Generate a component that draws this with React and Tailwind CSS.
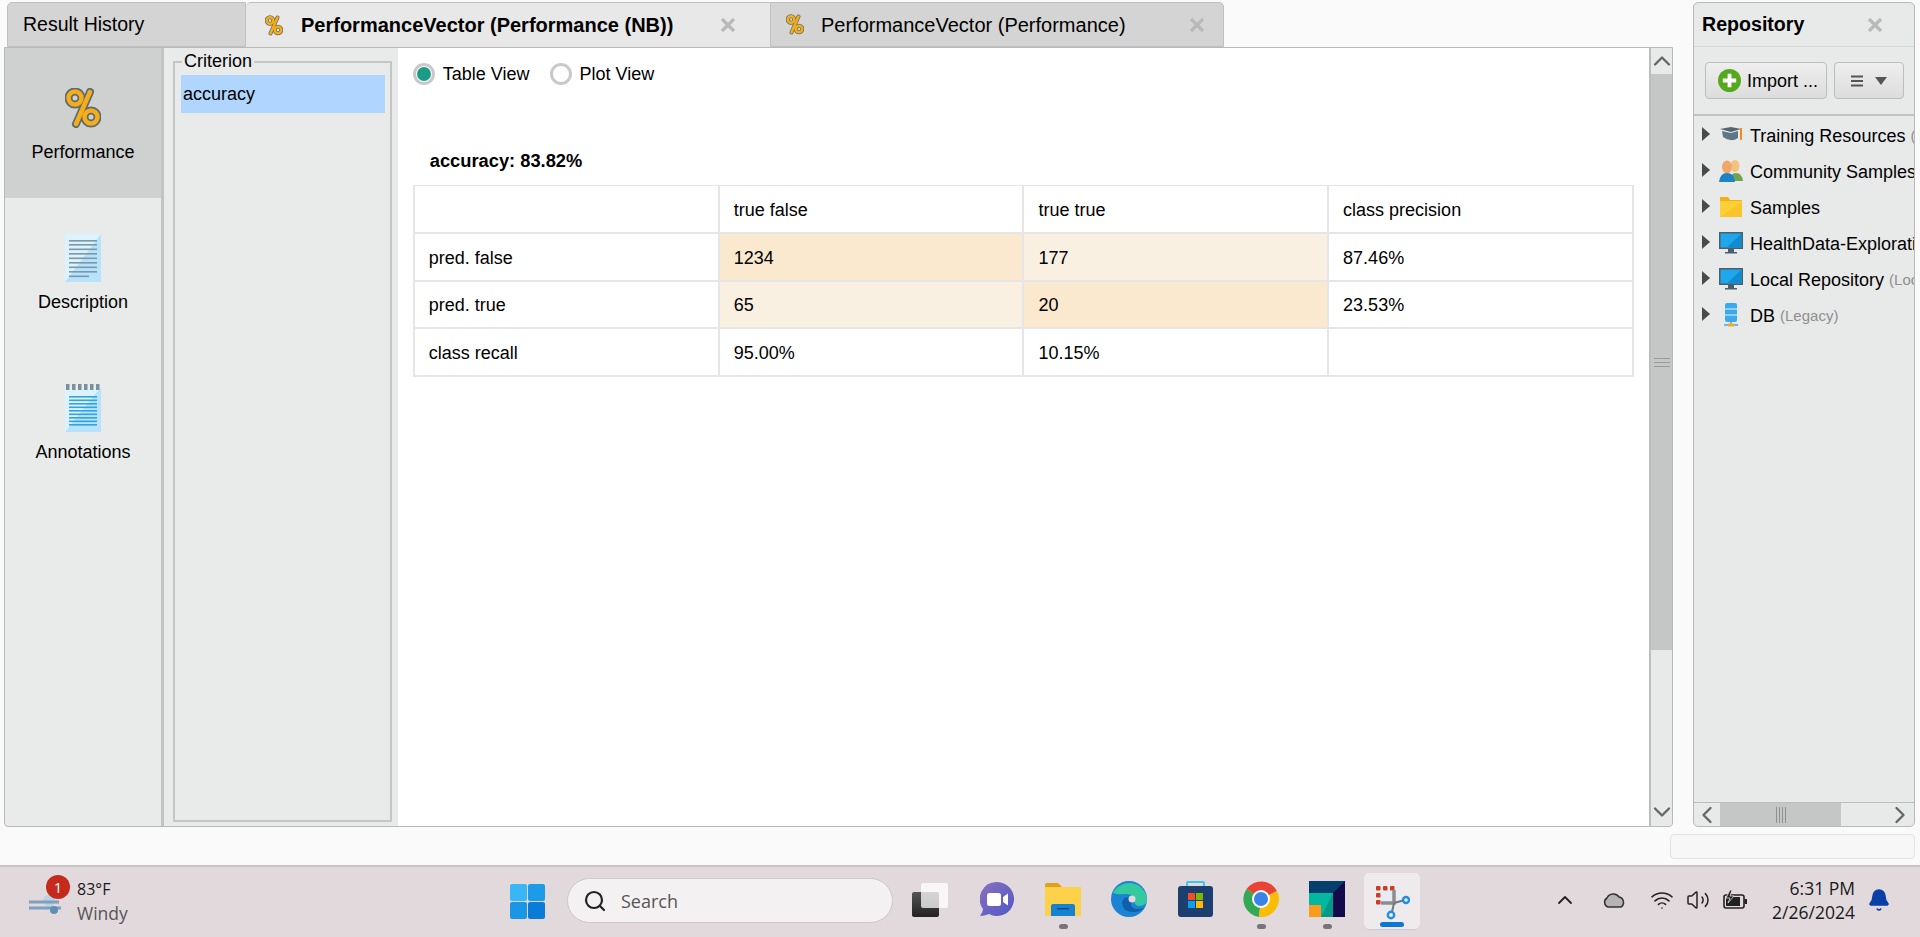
import { Wifi, Volume2, Search, ChevronUp, ChevronDown, ChevronLeft, ChevronRight, Bell } from 'lucide-react';

const rows = [
  { label: '', cells: ['true false', 'true true', 'class precision'], tint: ['', '', ''] },
  { label: 'pred. false', cells: ['1234', '177', '87.46%'], tint: ['bg-[#fae8cf]', 'bg-[#f9f0e2]', ''] },
  { label: 'pred. true', cells: ['65', '20', '23.53%'], tint: ['bg-[#f9f0e2]', 'bg-[#fae8cf]', ''] },
  { label: 'class recall', cells: ['95.00%', '10.15%', ''], tint: ['', '', ''] },
];

function PercentIcon({ small }) {
  return (
    <svg viewBox="0 0 36 40" className={small ? 'w-[18px] h-[21px]' : 'w-[36px] h-[40px]'}>
      <g fill="none" stroke="#5f6b70" strokeWidth="8">
        <circle cx="10" cy="10" r="6.5" />
        <circle cx="26" cy="29" r="6.5" />
        <path d="M25 4 L11 36" strokeLinecap="round" />
      </g>
      <g fill="none" stroke="#f5ae17" strokeWidth={small ? 5 : 4.5}>
        <circle cx="10" cy="10" r="6.5" />
        <circle cx="26" cy="29" r="6.5" />
        <path d="M25 4 L11 36" strokeLinecap="round" />
      </g>
    </svg>
  );
}

function DocIcon({ notes }) {
  const lines = notes ? [11, 14.5, 18, 21.5, 25, 28.5, 32, 35.5, 39] : [5, 9, 13.5, 18, 22.5, 27, 31.5, 36, 40.5];
  const color = notes ? '#2fa4e0' : '#7c97a8';
  return (
    <svg viewBox="0 0 36 48" className="w-[36px] h-[48px]">
      <rect x="0" y={notes ? 3 : 0} width="36" height={notes ? 45 : 48} fill="#b6e3fb" />
      <path d={notes ? 'M0 3 H36 L0 48 Z' : 'M0 0 H36 L0 48 Z'} fill="#dcf2fd" />
      {lines.map((y, i) => (
        <rect key={y} x="4" y={y + 1} width={i === lines.length - 1 && !notes ? 20 : 28} height="1.6" fill={color} />
      ))}
      {notes && [1, 7, 13, 19, 25, 31].map(x => <rect key={x} x={x} y="0" width="3.5" height="6" fill="#7d8f9a" />)}
    </svg>
  );
}

function CloseX() {
  return (
    <svg viewBox="0 0 16 16" className="w-[16px] h-[16px]">
      <path d="M2 2 L14 14 M14 2 L2 14" stroke="#b9b9b9" strokeWidth="3.2" />
    </svg>
  );
}

function TreeIcon({ kind }) {
  if (kind === 'cap') return (
    <svg viewBox="0 0 24 24" className="w-[24px] h-[24px]">
      <path d="M1 6 L12 4 L22 6 L12 9 Z" fill="#52646f" />
      <path d="M3 8 L12 10 L19 8 V15 Q12 20 4 14 Z" fill="#5f7785" />
      <path d="M22 5 V17" stroke="#f28a22" strokeWidth="2" />
    </svg>
  );
  if (kind === 'users') return (
    <svg viewBox="0 0 24 24" className="w-[24px] h-[24px]">
      <ellipse cx="16" cy="7" rx="4.5" ry="6" fill="#f2c27e" />
      <path d="M10 22 Q11 14 17 14 Q23 14 24 22 Z" fill="#6fa34f" />
      <ellipse cx="8" cy="8" rx="5" ry="6.5" fill="#f0a868" />
      <path d="M0 23 Q1 14 8 14 Q15 14 16 23 Z" fill="#1d82c6" />
    </svg>
  );
  if (kind === 'folder') return (
    <svg viewBox="0 0 24 24" className="w-[24px] h-[24px]">
      <path d="M1 2 H9 L11 5 H23 V22 H1 Z" fill="#f5ae17" />
      <rect x="1" y="6" width="22" height="16" fill="#fdd037" />
      <path d="M1 22 L23 7 V22 Z" fill="#fcc42b" />
    </svg>
  );
  if (kind === 'db') return (
    <svg viewBox="0 0 24 24" className="w-[24px] h-[24px]">
      <rect x="6" y="0" width="12" height="19" rx="2" fill="#3ba9ec" />
      <path d="M6 6 H18 M6 12 H18" stroke="#a8dcf8" strokeWidth="1.4" />
      <path d="M12 19 V22 M5 22 H19" stroke="#3ba9ec" strokeWidth="1.5" />
      <rect x="9" y="20.5" width="6" height="3" fill="#f5ae17" />
    </svg>
  );
  return (
    <svg viewBox="0 0 24 24" className="w-[24px] h-[24px]">
      <rect x="0" y="1" width="24" height="17" fill="#4b5f6b" />
      <rect x="1.5" y="2.5" width="21" height="14" fill="#1ea7ea" />
      <path d="M22.5 2.5 V16.5 H8 Z" fill="#138bd0" />
      <rect x="9" y="18" width="6" height="3" fill="#4b5f6b" />
      <rect x="6" y="21" width="12" height="1.5" fill="#4b5f6b" />
    </svg>
  );
}

const tree = [
  { icon: 'cap', name: 'Training Resources', note: '(' },
  { icon: 'users', name: 'Community Samples', note: '' },
  { icon: 'folder', name: 'Samples', note: '' },
  { icon: 'monitor', name: 'HealthData-Exploration', note: '' },
  { icon: 'monitor', name: 'Local Repository', note: '(Local)' },
  { icon: 'db', name: 'DB', note: '(Legacy)' },
];

function TaskIcon({ children, dot }) {
  return (
    <div className="w-[66px] h-[57px] flex flex-col items-center">
      <div className="h-[48px] flex items-center">{children}</div>
      <div className={`mt-[1px] h-[5px] rounded-full ${dot ? 'w-[9px] bg-[#77757a]' : 'w-0'}`} />
    </div>
  );
}

export default function App() {
  return (
    <div className="w-[1920px] h-[937px] flex flex-col overflow-hidden bg-[#fafafa] text-black text-[18px] font-['Liberation_Sans',Arial,sans-serif]">
      <div className="h-[865px] pt-[2px]">
        <div className="flex h-[825px] pl-[4px] pr-[5px]">
          {/* results area */}
          <div className="w-[1669px] flex flex-col">
            <div className="flex h-[45px] pl-[3px] text-[19.5px]">
              <div className="w-[239px] flex items-center pl-[15px] bg-[#d4d4d4] border border-[#c0c0c0] rounded-tl-[5px]">Result History</div>
              <div className="w-[524px] flex items-center pl-[19px] bg-[#e8e8e8] border-t border-[#c0c0c0] rounded-tl-[5px]">
                <PercentIcon small />
                <span className="ml-[18px] font-bold text-[20px]">PerformanceVector (Performance (NB))</span>
                <span className="ml-auto mr-[34px]"><CloseX /></span>
              </div>
              <div className="w-[454px] flex items-center pl-[15px] bg-[#d4d4d4] border border-[#c0c0c0] rounded-tr-[5px]">
                <PercentIcon small />
                <span className="ml-[17px] text-[20px]">PerformanceVector (Performance)</span>
                <span className="ml-auto mr-[18px]"><CloseX /></span>
              </div>
            </div>

            <div className="h-[780px] flex border border-[#b9b9b9] rounded-b-[4px] overflow-hidden bg-[#e9ebea]">
              {/* side tabs */}
              <div className="w-[159px] border-r-[3px] border-[#c2c3c3] flex flex-col">
                <div className="h-[150px] bg-[#cfd0d0] pt-[40px] flex flex-col items-center">
                  <PercentIcon />
                  <span className="mt-[13px] leading-[22px]">Performance</span>
                </div>
                <div className="h-[150px] pt-[36px] flex flex-col items-center">
                  <DocIcon />
                  <span className="mt-[9px] leading-[22px]">Description</span>
                </div>
                <div className="h-[150px] pt-[36px] flex flex-col items-center">
                  <DocIcon notes />
                  <span className="mt-[9px] leading-[22px]">Annotations</span>
                </div>
              </div>

              {/* criterion list */}
              <div className="w-[234px] pl-[9px] pr-[6px] pt-[3px] pb-[4px]">
                <fieldset className="h-full border-2 border-[#c4c5c5]">
                  <legend className="ml-[7px] px-[2px] leading-[21px]">Criterion</legend>
                  <div className="mt-[3px] ml-[6px] mr-[5px] h-[38px] bg-[#b0d6ff] flex items-center pl-[2px] pt-[1px]">accuracy</div>
                </fieldset>
              </div>

              {/* table view */}
              <div className="w-[1252px] bg-white pl-[15px]">
                <div className="h-[52px] flex items-center">
                  <span className="w-[22px] h-[22px] rounded-full border-[3px] border-[#c9c9c9] flex items-center justify-center">
                    <span className="w-[14px] h-[14px] rounded-full bg-[#1c9c84]" />
                  </span>
                  <span className="ml-[8px]">Table View</span>
                  <span className="ml-[20px] w-[22px] h-[22px] rounded-full border-[3px] border-[#c9c9c9]" />
                  <span className="ml-[8px]">Plot View</span>
                </div>
                <div className="mt-[48px] ml-[17px] h-[37px] font-bold text-[18.3px] leading-[26px]">accuracy: 83.82%</div>
                <div className="w-[1221px] border-2 border-t border-b-0 border-[#e6e6e6]">
                  {rows.map(row => (
                    <div key={row.label} className="h-[47.75px] grid grid-cols-[303px_1fr_1fr_1fr] border-b-2 border-[#e6e6e6]">
                      <div className="flex items-center pl-[14px] pt-[3px]">{row.label}</div>
                      {row.cells.map((cell, i) => (
                        <div key={i} className={`flex items-center pl-[14px] pt-[3px] border-l-2 border-[#e6e6e6] ${row.tint[i]}`}>{cell}</div>
                      ))}
                    </div>
                  ))}
                </div>
              </div>

              {/* vertical scrollbar */}
              <div className="w-[23px] border-l-2 border-[#bdbdbd] flex flex-col bg-[#e8e9e9]">
                <div className="h-[26px] flex items-center justify-center"><ChevronUp className="w-[28px] h-[28px] shrink-0 text-[#666]" strokeWidth={2} /></div>
                <div className="h-[576px] bg-[#c5c7c6] flex flex-col items-center justify-center gap-[3px]">
                  <div className="w-[16px] h-px bg-[#9a9a9a]" />
                  <div className="w-[16px] h-px bg-[#9a9a9a]" />
                  <div className="w-[16px] h-px bg-[#9a9a9a]" />
                </div>
                <div className="mt-auto h-[28px] flex items-center justify-center"><ChevronDown className="w-[28px] h-[28px] shrink-0 text-[#666]" strokeWidth={2} /></div>
              </div>
            </div>
          </div>

          {/* repository */}
          <div className="ml-[20px] w-[222px] flex flex-col border border-[#b9b9b9] rounded-[5px] bg-[#e8e9e9] overflow-hidden">
            <div className="h-[44px] flex items-center pl-[8px] border-b border-[#d8d8d8]">
              <span className="font-bold text-[19.6px]">Repository</span>
              <span className="ml-[63px]"><CloseX /></span>
            </div>
            <div className="h-[69px] border-b-2 border-[#c2c3c3] flex items-start pt-[15px] pl-[11px] gap-[7px]">
              <div className="w-[122px] h-[37px] rounded-[4px] border border-[#bdbdbd] bg-gradient-to-b from-[#eeeeee] to-[#dddddd] flex items-center pl-[12px]">
                <svg viewBox="0 0 24 24" className="w-[23px] h-[23px]">
                  <circle cx="12" cy="12" r="12" fill="#55a91c" />
                  <path d="M12 5 V19 M5 12 H19" stroke="#fff" strokeWidth="4" />
                </svg>
                <span className="ml-[6px] pt-[2px] whitespace-nowrap">Import ...</span>
              </div>
              <div className="w-[70px] h-[37px] rounded-[4px] border border-[#bdbdbd] bg-gradient-to-b from-[#eeeeee] to-[#dddddd] flex items-center justify-center gap-[12px]">
                <svg viewBox="0 0 12 12" className="w-[12px] h-[12px]"><path d="M0 1.5 H12 M0 6 H12 M0 10.5 H12" stroke="#555" strokeWidth="2" /></svg>
                <svg viewBox="0 0 12 8" className="w-[12px] h-[8px]"><path d="M0 0 H12 L6 8 Z" fill="#555" /></svg>
              </div>
            </div>
            <div className="flex-1 pt-[2px] pl-[8px] overflow-hidden">
              {tree.map(item => (
                <div key={item.name} className="h-[36px] flex items-center whitespace-nowrap">
                  <svg viewBox="0 0 8 14" className="w-[8px] h-[14px] shrink-0 -mt-[4px]"><path d="M0 0 L8 7 L0 14 Z" fill="#4a4a4a" /></svg>
                  <span className="ml-[9px] shrink-0 -mt-[2px]"><TreeIcon kind={item.icon} /></span>
                  <span className="ml-[7px]">{item.name}</span>
                  {item.note && <span className="ml-[5px] text-[15px] text-[#8f8f8f]">{item.note}</span>}
                </div>
              ))}
            </div>
            <div className="h-[24px] border-t border-[#bdbdbd] flex items-center">
              <div className="w-[26px] flex justify-center"><ChevronLeft className="w-[28px] h-[28px] shrink-0 text-[#666]" strokeWidth={2} /></div>
              <div className="w-[121px] h-full bg-[#c5c7c6] flex items-center justify-center gap-[2px]">
                <div className="w-px h-[16px] bg-[#8f8f8f]" />
                <div className="w-px h-[16px] bg-[#8f8f8f]" />
                <div className="w-px h-[16px] bg-[#8f8f8f]" />
                <div className="w-px h-[16px] bg-[#8f8f8f]" />
              </div>
              <div className="ml-auto flex justify-center"><ChevronRight className="w-[28px] h-[28px] shrink-0 text-[#666]" strokeWidth={2} /></div>
            </div>
          </div>
        </div>
        <div className="flex justify-end pr-[5px] mt-[7px]">
          <div className="w-[245px] h-[25px] rounded-[4px] border border-[#e2e2e2] bg-[#f7f7f7]" />
        </div>
      </div>

      {/* windows taskbar */}
      <div className="h-[72px] border-t-2 border-[#c8c4c6] bg-[#e2d9dd] flex items-start font-['Open_Sans',sans-serif] relative">
        <div className="w-[506px] flex pl-[29px] pt-[10px]">
          <div className="relative w-[48px] h-[48px] pt-[18px]">
            <svg viewBox="0 0 34 24" className="w-[34px] h-[24px]">
              <circle cx="20" cy="6" r="6" fill="#bcd3e6" />
              <path d="M0 7 H30 M0 13 H32" stroke="#7f9fbd" strokeWidth="3" />
              <circle cx="25" cy="15" r="4" fill="#5f8fb5" />
            </svg>
            <span className="absolute left-[17px] top-[-2px] w-[24px] h-[24px] rounded-full bg-[#c42b1c] text-white text-[14px] flex items-center justify-center">1</span>
          </div>
          <div className="leading-[25px]">
            <div className="text-[16px] text-[#1a1a1a]">83°F</div>
            <div className="text-[17.5px] text-[#555] -mt-[1px]">Windy</div>
          </div>
        </div>
        <div className="pt-[17px]">
          <svg viewBox="0 0 35 35" className="w-[35px] h-[35px] ml-[4px]">
            <rect x="0" y="0" width="17" height="17" rx="2" fill="#38b6f5" />
            <rect x="18" y="0" width="17" height="17" rx="2" fill="#1b9be8" />
            <rect x="0" y="18" width="17" height="17" rx="2" fill="#1a96e4" />
            <rect x="18" y="18" width="17" height="17" rx="2" fill="#0a7cd8" />
          </svg>
        </div>
        <div className="ml-[22px] mt-[11px] w-[326px] h-[45px] rounded-full bg-[#f4f1f2] border border-[#cfc6ca] flex items-center pl-[15px]">
          <Search className="w-[24px] h-[24px] text-[#222]" strokeWidth={2.2} />
          <span className="ml-[14px] pt-[1px] text-[18px] text-[#555]">Search</span>
        </div>
        <div className="ml-[19px] mt-[16px] w-[36px] h-[36px] relative">
          <div className="mt-[9px] w-[27px] h-[25px] rounded-[2px] bg-gradient-to-b from-[#555] to-[#222]" />
          <div className="absolute right-0 top-0 w-[27px] h-[25px] rounded-[2px] bg-white/75" />
        </div>
        <div className="ml-[16px] mt-[8px] flex">
          <TaskIcon>
            <svg viewBox="0 0 34 34" className="w-[34px] h-[34px]">
              <defs><linearGradient id="tm" x1="0" y1="0" x2="1" y2="1"><stop offset="0" stopColor="#8a72bd" /><stop offset="1" stopColor="#5056c8" /></linearGradient></defs>
              <path d="M17 0 A17 17 0 1 1 9 32 Q4 34 0 34 Q3 30 3 27 A17 17 0 0 1 17 0 Z" fill="url(#tm)" />
              <rect x="7" y="11" width="14" height="13" rx="2.5" fill="#fff" />
              <path d="M23 15 L28 11.5 V23.5 L23 20 Z" fill="#fff" />
            </svg>
          </TaskIcon>
          <TaskIcon dot>
            <svg viewBox="0 0 36 34" className="w-[36px] h-[34px]">
              <path d="M0 3 Q0 1 2 1 H13 L17 5 H36 V32 H0 Z" fill="#e0a21a" />
              <rect x="0" y="5" width="36" height="29" fill="#fdd14a" />
              <path d="M6 34 V24 Q6 22 8 22 H28 Q30 22 30 24 V34 Z" fill="#1783d0" />
              <rect x="12" y="26" width="12" height="1.5" fill="#0b4f8a" />
            </svg>
          </TaskIcon>
          <TaskIcon>
            <svg viewBox="0 0 36 36" className="w-[36px] h-[36px]">
              <circle cx="18" cy="18" r="18" fill="#1b83d4" />
              <path d="M2 12 A18 18 0 0 1 36 18 Q36 24 29 25 Q22 25 24 19 Q22 12 14 13 Q6 14 2 12 Z" fill="#35c9a0" />
              <path d="M22 17 Q12 14 11 22 Q12 32 24 31 Q30 30 33 27 Q22 30 20 24 Q20 20 22 17 Z" fill="#0f5ea8" />
              <circle cx="21" cy="18" r="3.5" fill="#e2d9dd" />
            </svg>
          </TaskIcon>
          <TaskIcon>
            <svg viewBox="0 0 35 36" className="w-[35px] h-[36px]">
              <path d="M9 6 V2 Q9 1 10 1 H25 Q26 1 26 2 V6" fill="none" stroke="#3cc3ee" strokeWidth="2" />
              <rect x="0" y="5" width="35" height="31" rx="3" fill="#1c3f70" />
              <rect x="10" y="12" width="7" height="7" fill="#f25022" />
              <rect x="18" y="12" width="7" height="7" fill="#7fba00" />
              <rect x="10" y="20" width="7" height="7" fill="#00a4ef" />
              <rect x="18" y="20" width="7" height="7" fill="#ffb900" />
            </svg>
          </TaskIcon>
          <TaskIcon dot>
            <svg viewBox="0 0 36 36" className="w-[36px] h-[36px]">
              <path d="M18 18 L3.5 8 A18 18 0 0 1 34 10 Z" fill="#ea4335" />
              <path d="M3.5 8 A18 18 0 0 0 16 36 L18 18 Z" fill="#34a853" />
              <path d="M34 10 A18 18 0 0 1 16 36 L18 18 Z" fill="#fbbc05" />
              <circle cx="18" cy="18" r="9" fill="#fff" />
              <circle cx="18" cy="18" r="7" fill="#3b82e8" />
            </svg>
          </TaskIcon>
          <TaskIcon dot>
            <svg viewBox="0 0 36 36" className="w-[36px] h-[36px]">
              <rect width="36" height="36" fill="#053f6e" />
              <path d="M36 0 V36 H24 V12 Z" fill="#120a4a" />
              <path d="M0 12 H24 V36 H0 Z" fill="#03b8a0" />
              <path d="M24 12 V36 H12 Z" fill="#069a86" />
              <rect x="0" y="24" width="12" height="12" fill="#fc9a1c" />
            </svg>
          </TaskIcon>
        </div>
        <div className="ml-[4px] mt-[6px] w-[56px] h-[57px] rounded-[5px] bg-[#efebed] border-b border-[#cfc9cc] flex flex-col items-center">
          <svg viewBox="0 0 36 36" className="mt-[11px] w-[36px] h-[36px]">
            <rect x="3" y="1" width="24" height="24" rx="2" fill="#e6ecf1" />
            <g fill="#d03a1e">
              <rect x="2" y="2" width="4.5" height="4.5" rx="1" />
              <rect x="9" y="2" width="4.5" height="4.5" rx="1" />
              <rect x="16" y="2" width="4.5" height="4.5" rx="1" />
              <rect x="2" y="9" width="4.5" height="4.5" rx="1" />
              <rect x="2" y="16" width="4.5" height="4.5" rx="1" />
            </g>
            <path d="M7 19 H20 V6" fill="none" stroke="#8c8c8c" strokeWidth="3.5" />
            <path d="M20 19 L29 16.5 M20 19 L18 28" stroke="#777" strokeWidth="2" />
            <circle cx="32" cy="16" r="3" fill="none" stroke="#1f8fe0" strokeWidth="2.4" />
            <circle cx="17" cy="31" r="3.2" fill="none" stroke="#1f8fe0" strokeWidth="2.4" />
          </svg>
          <div className="mt-[2px] w-[24px] h-[5px] rounded-full bg-[#0a78d4]" />
        </div>
        <div className="ml-auto flex items-center h-[65px] pr-[29px]">
          <ChevronUp className="w-[24px] h-[24px] text-[#222]" strokeWidth={1.8} />
          <svg viewBox="0 0 24 16" className="ml-[25px] w-[24px] h-[16px]">
            <path d="M6 15 A5 5 0 0 1 5 6 A7 7 0 0 1 17 5 A5.5 5.5 0 0 1 19 15 Z" fill="#b5b3b5" stroke="#333" strokeWidth="1.5" />
          </svg>
          <Wifi className="ml-[24px] w-[24px] h-[24px] text-[#222]" strokeWidth={1.6} />
          <Volume2 className="ml-[12px] w-[24px] h-[24px] text-[#222]" strokeWidth={1.5} />
          <svg viewBox="0 0 24 20" className="ml-[13px] w-[24px] h-[20px]">
            <rect x="1" y="5" width="20" height="13" rx="2" fill="none" stroke="#222" strokeWidth="1.6" />
            <rect x="3" y="7" width="14" height="9" fill="#222" />
            <rect x="21.5" y="9" width="2.5" height="5" fill="#222" />
            <path d="M7 0 L3 8 H7 L5 13 L11 6 H7 L9 0 Z" fill="#222" stroke="#e2d9dd" strokeWidth="0.8" />
          </svg>
          <div className="w-[108px] text-right text-[#1a1a1a] text-[17.5px] leading-[24px]">
            <div>6:31 PM</div>
            <div>2/26/2024</div>
          </div>
          <Bell className="ml-[12px] w-[24px] h-[24px] text-[#0b3fa8] fill-[#0b3fa8]" strokeWidth={1.5} />
        </div>
      </div>
    </div>
  );
}
